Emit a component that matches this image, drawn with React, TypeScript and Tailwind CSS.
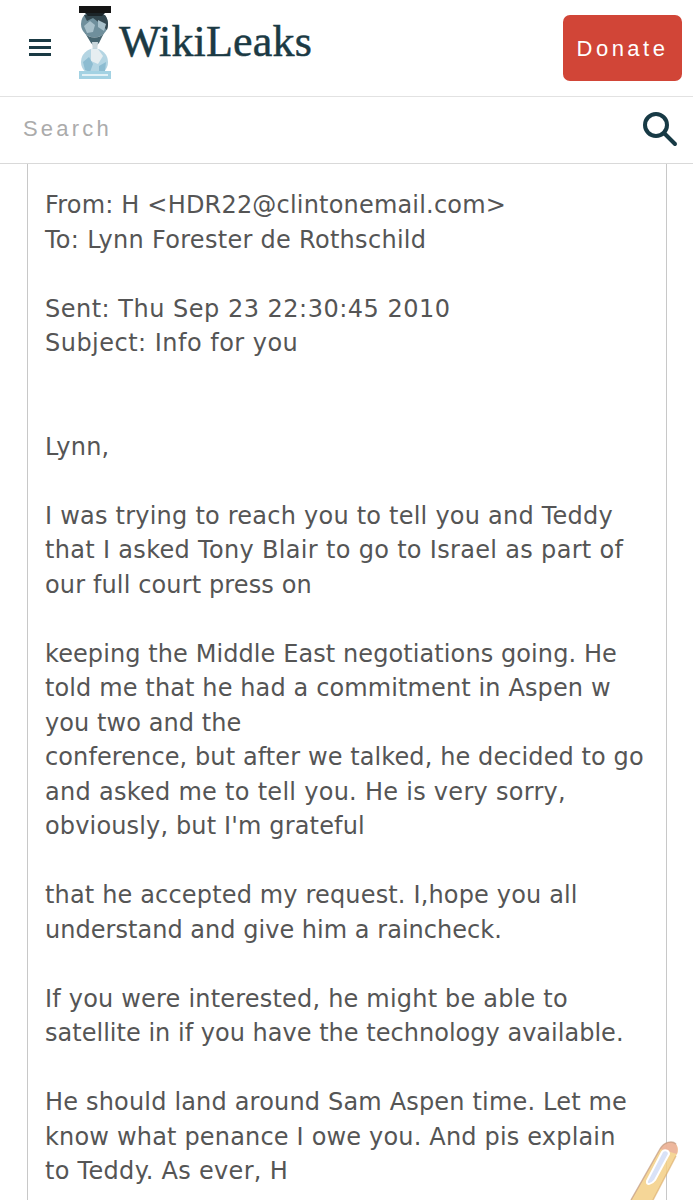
import * as React from 'react';

// tracking per line: the original face is a touch wider than DejaVu, and not evenly
const emailLines: [string, string?][] = [
    ["From: H <HDR22@clintonemail.com>", "tracking-[0.19px]"],
    ["To: Lynn Forester de Rothschild", "tracking-[0.29px]"],
    [""],
    ["Sent: Thu Sep 23 22:30:45 2010", "tracking-[0.5px]"],
    ["Subject: Info for you", "tracking-[0.48px]"],
    [""],
    [""],
    ["Lynn,", "tracking-[0.2px]"],
    [""],
    ["I was trying to reach you to tell you and Teddy", "tracking-[0.23px]"],
    ["that I asked Tony Blair to go to Israel as part of", "tracking-[0.32px]"],
    ["our full court press on", "tracking-[0.13px]"],
    [""],
    ["keeping the Middle East negotiations going. He", "tracking-[0.09px]"],
    ["told me that he had a commitment in Aspen w", "tracking-[0.12px]"],
    ["you two and the", "tracking-[0.07px]"],
    ["conference, but after we talked, he decided to go", "tracking-[0.1px]"],
    ["and asked me to tell you. He is very sorry,", "tracking-[0.28px]"],
    ["obviously, but I'm grateful", "tracking-[0.15px]"],
    [""],
    ["that he accepted my request. I,hope you all", "tracking-[0.16px]"],
    ["understand and give him a raincheck.", "tracking-[0.03px]"],
    [""],
    ["If you were interested, he might be able to", "tracking-[0.2px]"],
    ["satellite in if you have the technology available.", "tracking-[0.02px]"],
    [""],
    ["He should land around Sam Aspen time. Let me", "tracking-[0.18px]"],
    ["know what penance I owe you. And pis explain", "tracking-[0.18px]"],
    ["to Teddy. As ever, H", "tracking-[0.3px]"],
];

const HourglassLogo = () => (
    <svg width="32" height="74" viewBox="0 0 32 74" className="shrink-0">
        <circle cx="15.5" cy="18" r="13.5" fill="#6f8f9c" />
        <path d="M5 9 L26 9 C29 13 30 18 28 24 L22 18 L14 12 L8 15 Z" fill="#33474f" />
        <path d="M5 20 L11 15 L16 19 L14 26 L8 27 Z M19 14 L27 18 L25 25 L19 21 Z" fill="#a8c0ca" />
        <path d="M6 27 C10 33 21 33 25 27 L20 37 L16 41 L12 37 Z" fill="#466570" />
        <path d="M13 36 L19 36 L18 46 L20 50 L12 50 L14 46 Z" fill="#c9d6db" />
        <circle cx="15.5" cy="56" r="13.5" fill="#b4d5e3" />
        <path d="M12 43 L19 43 L24 50 L19 58 L12 55 Z" fill="#e6eef1" />
        <path d="M4 56 L10 51 L14 58 L11 66 L6 64 Z M20 60 L27 56 L26 65 L20 67 Z" fill="#8dbcd1" />
        <rect x="0" y="0" width="32" height="7" fill="#151515" />
        <path d="M6 7 L26 7 L23 10 L9 10 Z" fill="#1c2529" />
        <rect x="0" y="65" width="32" height="8" fill="#a3d2e3" />
        <rect x="3" y="68" width="26" height="2" fill="#e2f1f6" />
    </svg>
);

const Pencil = () => (
    <svg width="60" height="66" viewBox="0 0 60 66" className="absolute right-[5px] bottom-0">
        <path d="M3 66 L32 15 C36 8 44 6 48 10 C51 14 50 19 48 22 L25 66 Z" fill="#f3cf85" fillOpacity="0.85" />
        <path d="M32 15 C36 8 44 6 48 10 C50 13 50 17 49 20 Z" fill="#e9a9a0" fillOpacity="0.7" />
        <path d="M19 47 L34 18 C36 15 41 16 41 20 L27 46 C24 50 18 52 19 47 Z" fill="#d9e2f7" stroke="#ffffff" strokeWidth="2" />
        <path d="M3 66 L32 15 C36 8 44 6 48 10" fill="none" stroke="#c29a82" strokeWidth="1.5" strokeOpacity="0.7" />
        <path d="M25 66 L48 22" fill="none" stroke="#d9a866" strokeWidth="1.5" strokeOpacity="0.6" />
    </svg>
);

const App: React.FC = () => {
    return (
        <div className="relative h-[1200px] w-[693px] overflow-hidden bg-white font-['Liberation_Sans',sans-serif]">
            <header className="flex h-[97px] items-center border-b border-[#e2e2e2] pl-[29px] pr-[11px]">
                <div className="mb-[2px] flex w-[22px] flex-col gap-[4px]">
                    <div className="h-[3px] bg-[#1a3a44]" />
                    <div className="h-[3px] bg-[#1a3a44]" />
                    <div className="h-[3px] bg-[#1a3a44]" />
                </div>
                <div className="mb-[11px] ml-[28px] flex items-center">
                    <HourglassLogo />
                    <span className="mb-[1px] ml-[8px] font-['Liberation_Serif',serif] text-[44px] leading-none tracking-[0.2px] text-[#1b3a44] [-webkit-text-stroke:0.5px_#1b3a44]">WikiLeaks</span>
                </div>
                <button className="mb-[1px] ml-auto h-[66px] w-[119px] rounded-[7px] bg-[#d14537] pt-[2px] text-[22px] tracking-[3.5px] text-white">Donate</button>
            </header>
            <div className="flex h-[67px] items-center justify-between border-b border-[#d9d9d9] pl-[23px] pr-[15px]">
                <span className="mb-[4px] text-[22px] tracking-[3.2px] text-[#ababab]">Search</span>
                <svg width="36" height="36" viewBox="0 0 36 36" fill="none" stroke="#173a45" strokeWidth="4">
                    <circle cx="14" cy="13" r="11" />
                    <path d="M22 21 L33 32" strokeLinecap="round" />
                </svg>
            </div>
            <main className="mx-[27px] h-[1036px] w-[640px] border-x border-[#c8c8c8] px-[17px] pt-[24px] font-['DejaVu_Sans',sans-serif] text-[24px] leading-[34.5px] text-[#555555]">
                {emailLines.map(([line, tracking], i) => (
                    <div key={i} className={`h-[34.5px] whitespace-pre ${tracking ?? ""}`}>{line}</div>
                ))}
            </main>
            <Pencil />
        </div>
    );
};

export default App;
